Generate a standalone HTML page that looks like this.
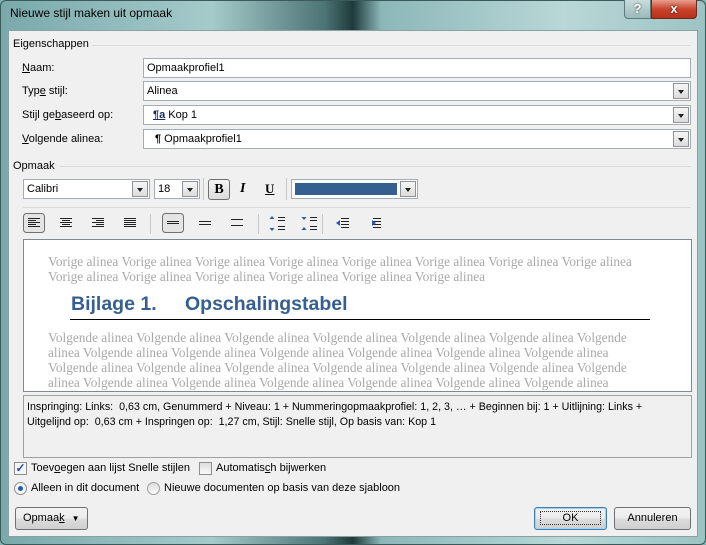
<!DOCTYPE html>
<html><head><style>
*{box-sizing:border-box;margin:0;padding:0}
body{width:706px;height:545px;position:relative;overflow:hidden;background:#7fb0b0;font-family:"Liberation Sans",sans-serif;font-size:11px;color:#000}
.a{position:absolute}
.win{left:0;top:0;width:706px;height:545px;background:linear-gradient(90deg,#7aa9ab 0%,#a5caca 30%,#4d7475 46%,#1f3a3b 50%,#8cb7b8 54%,#b9d7d7 80%,#9cc3c3 100%);border:1px solid #3b5a5c;border-radius:6px}
.client{left:8px;top:30px;width:690px;height:507px;background:#f0f0f0;border:1px solid #8aa1a3}
.lbl{white-space:nowrap}
.box{background:#fff;border:1px solid #a5acb5;height:20px;padding:3px 3px;white-space:nowrap}
.dd{position:absolute;right:1px;top:1px;width:16px;height:16px;background:linear-gradient(#f6f6f6,#dcdcdc);border:1px solid #8d9399}
.dd:after{content:"";position:absolute;left:4px;top:6px;border-left:3px solid transparent;border-right:3px solid transparent;border-top:4px solid #222}
.hr{height:1px;background:#dadada}
.btn{border:1px solid #707070;border-radius:3px;background:linear-gradient(#f2f2f2,#ebebeb 50%,#dddddd 51%,#cfcfcf);text-align:center;line-height:20px;height:23px}
.gray{color:#a8a8a8;font-family:"Liberation Serif",serif;font-size:13.3px;line-height:15px;white-space:nowrap}
.tb{border:1px solid #707070;border-radius:3px;background:linear-gradient(#f5f5f5,#dcdcdc)}
.sep{width:1px;background:#c8c8c8}
</style></head><body>
<div class="a win"></div>
<div class="a lbl" style="left:10px;top:6px;font-size:12px">Nieuwe stijl maken uit opmaak</div>
<div class="a" style="left:624px;top:0;width:27px;height:19px;border:1px solid #5a7a7c;border-top:none;border-radius:0 0 0 4px;background:linear-gradient(#c8dcdc,#9bbaba);text-align:center;color:#fff;font-weight:bold;font-size:13px;line-height:18px;text-shadow:0 0 2px #333">?</div>
<div class="a" style="left:651px;top:0;width:46px;height:19px;border:1px solid #6a2a20;border-top:none;border-radius:0 0 4px 0;background:linear-gradient(#e8a090,#c8442c 50%,#b83018);text-align:center;color:#fff;font-weight:bold;font-size:13px;line-height:18px;text-shadow:0 0 2px #300">x</div>
<div class="a client"></div>

<div class="a lbl" style="left:13px;top:38px">Eigenschappen</div>
<div class="a hr" style="left:92px;top:45px;width:599px"></div>
<div class="a lbl" style="left:22px;top:62px"><u>N</u>aam:</div>
<div class="a box" style="left:143px;top:58px;width:548px">Opmaakprofiel1</div>
<div class="a lbl" style="left:22px;top:85px">Typ<u>e</u> stijl:</div>
<div class="a box" style="left:143px;top:81px;width:548px">Alinea<div class="dd"></div></div>
<div class="a lbl" style="left:22px;top:109px">Stijl ge<u>b</u>aseerd op:</div>
<div class="a box" style="left:143px;top:105px;width:548px"><span style="color:#1a2a6a;font-size:11px;font-weight:bold;text-decoration:underline;margin-left:6px">¶a</span> Kop 1<div class="dd"></div></div>
<div class="a lbl" style="left:22px;top:133px"><u>V</u>olgende alinea:</div>
<div class="a box" style="left:143px;top:129px;width:548px"><span style="font-weight:bold;margin-left:8px">¶</span> Opmaakprofiel1<div class="dd"></div></div>

<div class="a lbl" style="left:13px;top:160px">Opmaak</div>
<div class="a hr" style="left:60px;top:166px;width:631px"></div>
<div class="a box" style="left:23px;top:179px;width:127px">Calibri<div class="dd"></div></div>
<div class="a box" style="left:154px;top:179px;width:46px">18<div class="dd"></div></div>
<div class="a sep" style="left:203px;top:178px;height:22px"></div>
<div class="a tb" style="left:208px;top:179px;width:22px;height:21px;text-align:center;font-family:'Liberation Serif',serif;font-weight:bold;font-size:14px;line-height:19px">B</div>
<div class="a" style="left:240px;top:181px;font-family:'Liberation Serif',serif;font-style:italic;font-weight:bold;font-size:14px">I</div>
<div class="a" style="left:265px;top:181px;font-family:'Liberation Serif',serif;font-weight:bold;font-size:13px;text-decoration:underline">U</div>
<div class="a sep" style="left:286px;top:178px;height:22px"></div>
<div class="a box" style="left:291px;top:179px;width:127px"><div style="position:absolute;left:3px;top:3px;width:102px;height:12px;background:#365f91"></div><div class="dd"></div></div>
<div class="a hr" style="left:23px;top:207px;width:668px"></div>

<svg class="a" style="left:22px;top:212px" width="380" height="24" viewBox="0 0 380 24">
<rect x="1.5" y="1.5" width="21" height="19" rx="3" fill="#e4e4e4" stroke="#707070"/>
<g stroke="#222" stroke-width="1">
<path d="M6 6.5h12M6 8.5h8M6 10.5h12M6 12.5h8M6 14.5h12"/>
<path d="M38 6.5h12M40 8.5h8M38 10.5h12M40 12.5h8M38 14.5h12"/>
<path d="M70 6.5h12M74 8.5h8M70 10.5h12M74 12.5h8M70 14.5h12"/>
<path d="M102 6.5h12M102 8.5h12M102 10.5h12M102 12.5h12M102 14.5h12"/>
</g>
<line x1="128.5" y1="2" x2="128.5" y2="22" stroke="#c8c8c8"/>
<rect x="140.5" y="1.5" width="21" height="19" rx="3" fill="#e4e4e4" stroke="#707070"/>
<g stroke="#222"><path d="M145 9.5h12M145 11.5h12M177 9.5h12M177 12.5h12M209 7.5h12M209 13.5h12"/></g>
<line x1="236.5" y1="2" x2="236.5" y2="22" stroke="#c8c8c8"/>
<g stroke="#222"><path d="M256 5.5h7M256 8.5h7M256 14.5h7M256 17.5h7M288 5.5h7M288 8.5h7M288 14.5h7M288 17.5h7"/></g>
<g fill="#2a5aa8"><path d="M250 4l2.5 3h-5zM250 19l2.5-3h-5zM282 8l2.5-3h-5zM282 15l2.5 3h-5z"/></g>
<line x1="300.5" y1="2" x2="300.5" y2="22" stroke="#c8c8c8"/>
<g stroke="#222"><path d="M319 6.5h8M319 9.5h8M319 12.5h8M319 15.5h8M351 6.5h8M351 9.5h8M351 12.5h8M351 15.5h8"/></g>
<g fill="#2a5aa8"><path d="M314 11l4-3v6zM354 11l-4-3v6z"/></g>
</svg>

<div class="a" style="left:23px;top:239px;width:669px;height:153px;background:#fff;border:1px solid #828790"></div>
<div class="a gray" style="left:48px;top:254px">Vorige alinea Vorige alinea Vorige alinea Vorige alinea Vorige alinea Vorige alinea Vorige alinea Vorige alinea<br>Vorige alinea Vorige alinea Vorige alinea Vorige alinea Vorige alinea Vorige alinea</div>
<div class="a lbl" style="left:71px;top:293px;font-weight:bold;font-size:19.5px;color:#365f91">Bijlage 1.</div>
<div class="a lbl" style="left:185px;top:293px;font-weight:bold;font-size:19.5px;color:#365f91">Opschalingstabel</div>
<div class="a" style="left:70px;top:319px;width:580px;height:1px;background:#000"></div>
<div class="a gray" style="left:48px;top:330px">Volgende alinea Volgende alinea Volgende alinea Volgende alinea Volgende alinea Volgende alinea Volgende<br>alinea Volgende alinea Volgende alinea Volgende alinea Volgende alinea Volgende alinea Volgende alinea<br>Volgende alinea Volgende alinea Volgende alinea Volgende alinea Volgende alinea Volgende alinea Volgende<br>alinea Volgende alinea Volgende alinea Volgende alinea Volgende alinea Volgende alinea Volgende alinea</div>

<div class="a" style="left:23px;top:395px;width:669px;height:63px;background:#f0f0f0;border:1px solid #a0a0a0;padding:4px 3px;font-size:10.7px;line-height:15px;white-space:nowrap">Inspringing: Links:&nbsp; 0,63 cm, Genummerd + Niveau: 1 + Nummeringopmaakprofiel: 1, 2, 3, … + Beginnen bij: 1 + Uitlijning: Links +<br>Uitgelijnd op:&nbsp; 0,63 cm + Inspringen op:&nbsp; 1,27 cm, Stijl: Snelle stijl, Op basis van: Kop 1</div>

<div class="a" style="left:14px;top:462px;width:13px;height:13px;border:1px solid #8e8f8f;background:#f4f4f4;color:#2a4a9a;font-size:12px;line-height:11px;text-align:center;font-weight:bold">✓</div>
<div class="a lbl" style="left:31px;top:462px">Toev<u>o</u>egen aan lijst Snelle stijlen</div>
<div class="a" style="left:199px;top:462px;width:13px;height:13px;border:1px solid #8e8f8f;background:linear-gradient(#ddd,#fafafa)"></div>
<div class="a lbl" style="left:216px;top:462px">Automatis<u>c</u>h bijwerken</div>
<div class="a" style="left:14px;top:482px;width:13px;height:13px;border:1px solid #8e8f8f;border-radius:50%;background:#f4f4f4"><div style="position:absolute;left:3px;top:3px;width:5px;height:5px;border-radius:50%;background:#1f5fa8"></div></div>
<div class="a lbl" style="left:31px;top:482px">Alleen in dit document</div>
<div class="a" style="left:147px;top:482px;width:13px;height:13px;border:1px solid #a0a0a0;border-radius:50%;background:linear-gradient(#ddd,#fafafa)"></div>
<div class="a lbl" style="left:164px;top:482px">Nieuwe documenten op basis van deze sjabloon</div>

<div class="a btn" style="left:15px;top:507px;width:73px;text-align:left;padding-left:7px">Opmaa<u>k</u> <span style="font-size:8px;margin-left:4px">▼</span></div>
<div class="a btn" style="left:534px;top:507px;width:73px;border-color:#3c7fb1;box-shadow:inset 0 0 0 1px #9fd4f5"><span style="outline:1px dotted #333;padding:0 22px">OK</span></div>
<div class="a btn" style="left:614px;top:507px;width:77px">Annuleren</div>
</body></html>
